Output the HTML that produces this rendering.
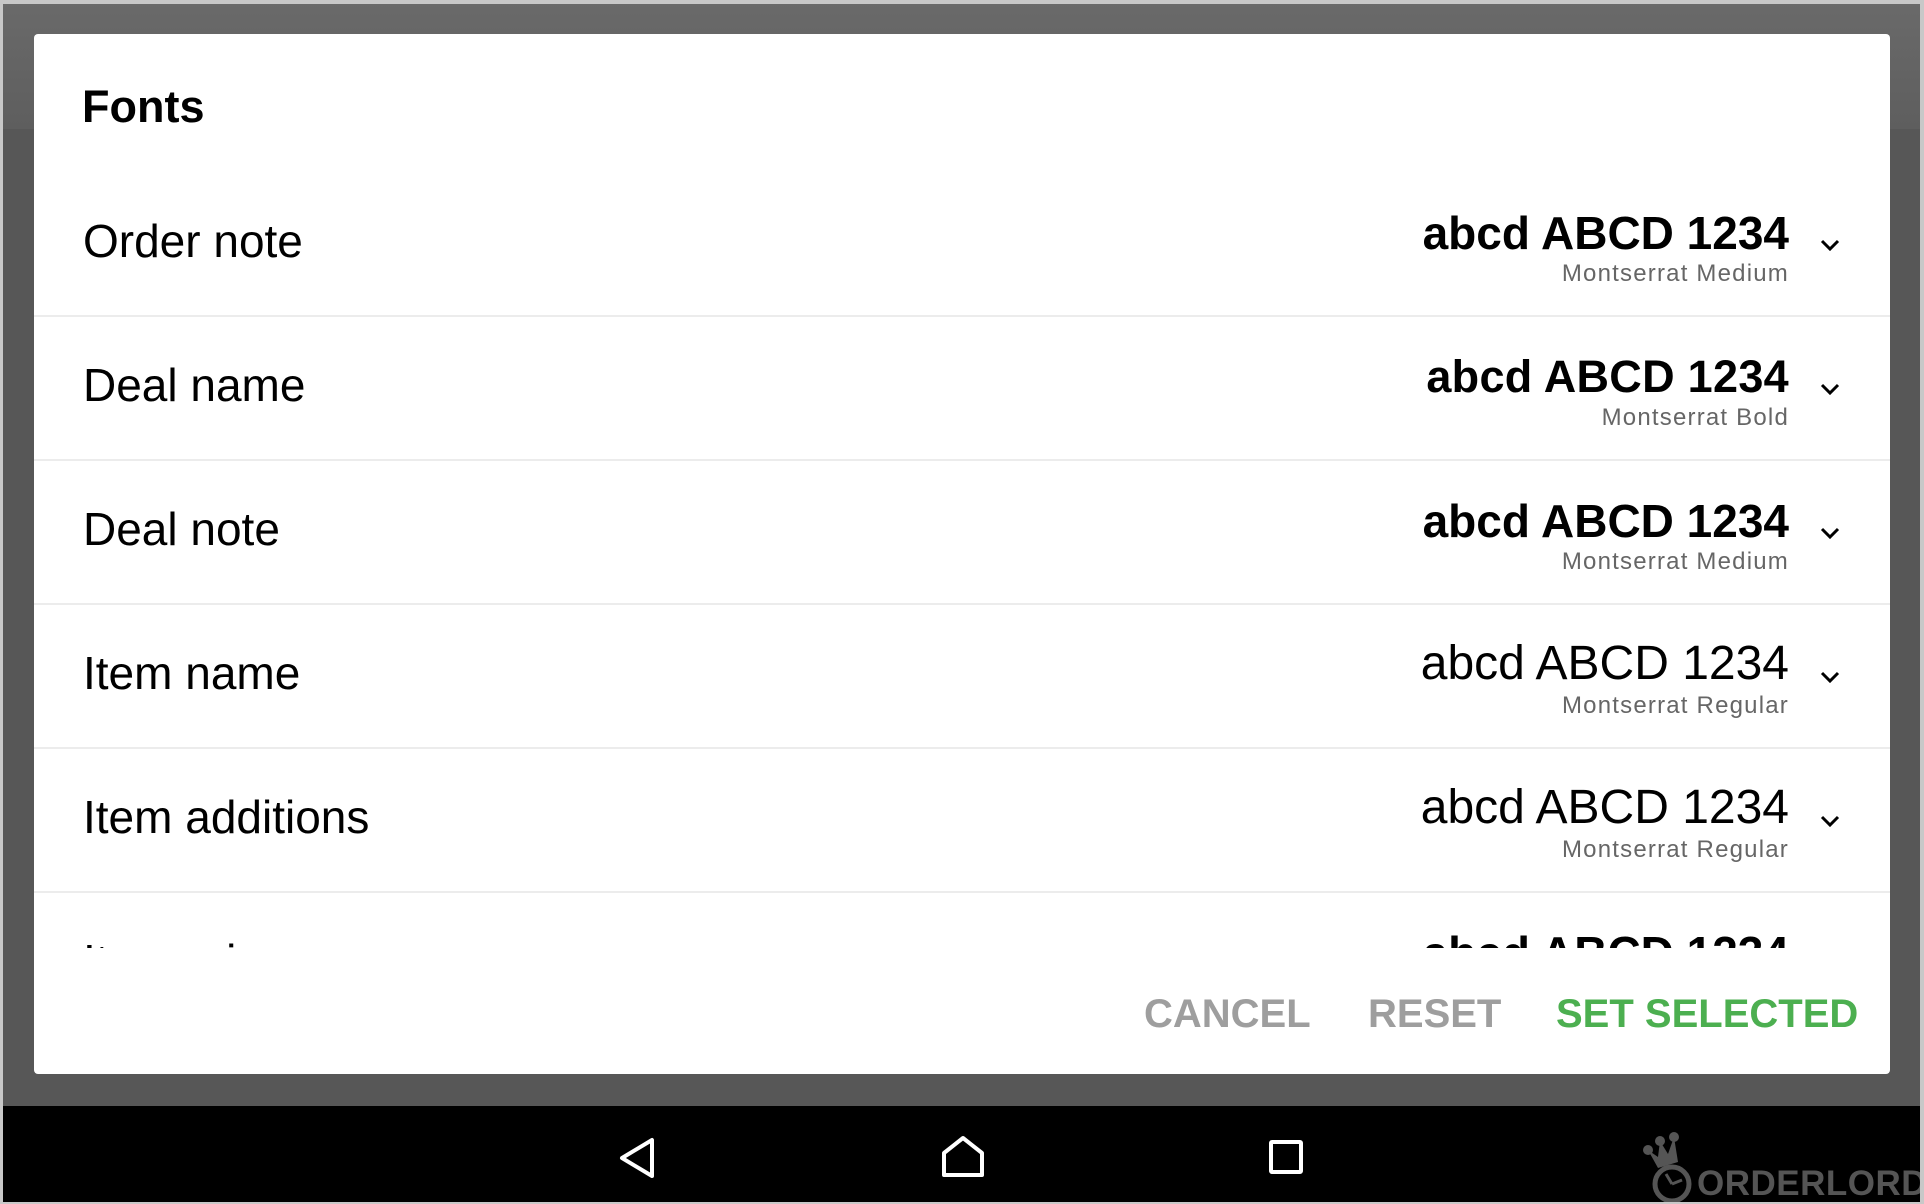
<!DOCTYPE html>
<html><head><meta charset="utf-8"><style>
*{margin:0;padding:0;box-sizing:border-box}
body{width:1924px;height:1204px;overflow:hidden;position:relative;background:#575757;font-family:"Liberation Sans",sans-serif}
.top{position:absolute;left:0;top:0;width:1924px;height:129px;background:linear-gradient(#6a6a6a,#5e5e5e)}
.frame{position:absolute;inset:0;border-top:4px solid #c8c8c8;border-left:3px solid #c8c8c8;border-right:4px solid #c8c8c8;border-bottom:2px solid #c8c8c8;pointer-events:none;z-index:5}
.dlg{position:absolute;left:34px;top:34px;width:1856px;height:1040px;background:#fff;border-radius:4px;overflow:hidden}
.title{position:absolute;left:48px;top:50px;font-size:45px;font-weight:bold;color:#000;line-height:1}
.list{position:absolute;left:0;top:139px;width:1856px;height:775px;overflow:hidden}
.row{position:absolute;left:0;width:1856px;height:144px;border-bottom:2px solid #ececec}
.lab{position:absolute;left:49px;top:45px;font-size:46px;color:#000;line-height:1}
.pv{position:absolute;right:101px;top:37px;font-size:46px;font-weight:bold;color:#000;line-height:1;white-space:nowrap}
.pv.b{font-size:45px;letter-spacing:0.3px}
.pv.r{font-weight:normal;font-size:48px;top:35px}
.sub{position:absolute;right:101px;top:89px;font-size:24px;color:#666;line-height:1;white-space:nowrap;letter-spacing:1.2px}
.chev{position:absolute;left:1786px;top:66px}
.btn{position:absolute;top:960px;font-size:40px;font-weight:bold;line-height:1;color:#9e9e9e;white-space:nowrap}
.nav{position:absolute;left:0;top:1106px;width:1924px;height:96px;background:#000}
</style></head><body>
<div class="top"></div>
<div class="dlg">
<div class="title">Fonts</div>
<div class="list">
 <div class="row" style="top:0"><div class="lab">Order note</div><div class="pv">abcd ABCD 1234</div><div class="sub">Montserrat Medium</div><svg class="chev" width="20" height="12" viewBox="0 0 20 12"><path d="M2 2 L10 10 L18 2" stroke="#000" stroke-width="3" fill="none"/></svg></div>
 <div class="row" style="top:144px"><div class="lab">Deal name</div><div class="pv b">abcd ABCD 1234</div><div class="sub">Montserrat Bold</div><svg class="chev" width="20" height="12" viewBox="0 0 20 12"><path d="M2 2 L10 10 L18 2" stroke="#000" stroke-width="3" fill="none"/></svg></div>
 <div class="row" style="top:288px"><div class="lab">Deal note</div><div class="pv">abcd ABCD 1234</div><div class="sub">Montserrat Medium</div><svg class="chev" width="20" height="12" viewBox="0 0 20 12"><path d="M2 2 L10 10 L18 2" stroke="#000" stroke-width="3" fill="none"/></svg></div>
 <div class="row" style="top:432px"><div class="lab">Item name</div><div class="pv r">abcd ABCD 1234</div><div class="sub">Montserrat Regular</div><svg class="chev" width="20" height="12" viewBox="0 0 20 12"><path d="M2 2 L10 10 L18 2" stroke="#000" stroke-width="3" fill="none"/></svg></div>
 <div class="row" style="top:576px"><div class="lab">Item additions</div><div class="pv r">abcd ABCD 1234</div><div class="sub">Montserrat Regular</div><svg class="chev" width="20" height="12" viewBox="0 0 20 12"><path d="M2 2 L10 10 L18 2" stroke="#000" stroke-width="3" fill="none"/></svg></div>
 <div class="row" style="top:720px;border:none"><div class="lab">Item price</div><div class="pv">abcd ABCD 1234</div></div>
</div>
<div class="btn" style="left:1110px">CANCEL</div>
<div class="btn" style="left:1334px">RESET</div>
<div class="btn" style="left:1522px;color:#4caf50">SET SELECTED</div>
</div>
<div class="nav">
<svg style="position:absolute;left:618px;top:31px" width="40" height="42" viewBox="0 0 40 42"><path d="M34 3 L34 39 L4 21 Z" stroke="#fff" stroke-width="4" fill="none" stroke-linejoin="round"/></svg>
<svg style="position:absolute;left:940px;top:29px" width="46" height="44" viewBox="0 0 46 44"><path d="M4 40 L4 18 L23 3 L42 18 L42 40 Z" stroke="#fff" stroke-width="4" fill="none" stroke-linejoin="round"/></svg>
<svg style="position:absolute;left:1268px;top:33px" width="36" height="36" viewBox="0 0 36 36"><rect x="3" y="3" width="30" height="30" stroke="#fff" stroke-width="4" fill="none" rx="1"/></svg>
<svg style="position:absolute;left:1638px;top:26px" width="60" height="72" viewBox="0 0 60 72"><circle cx="10" cy="18" r="5" fill="#555"/><circle cx="22" cy="9" r="5" fill="#555"/><circle cx="36" cy="5" r="5" fill="#555"/><path d="M10 18 L20 36 L40 30 L36 5 L30 22 L22 9 L20 25 Z" fill="#555"/><circle cx="34" cy="52" r="17" stroke="#555" stroke-width="5" fill="none"/><path d="M34 52 L28 42 M34 52 L44 48" stroke="#555" stroke-width="3"/></svg>
<div style="position:absolute;left:1697px;top:58px;font-size:35px;font-weight:bold;color:#555;letter-spacing:0.5px">ORDERLORD</div>
</div>
<div class="frame"></div>
</body></html>
